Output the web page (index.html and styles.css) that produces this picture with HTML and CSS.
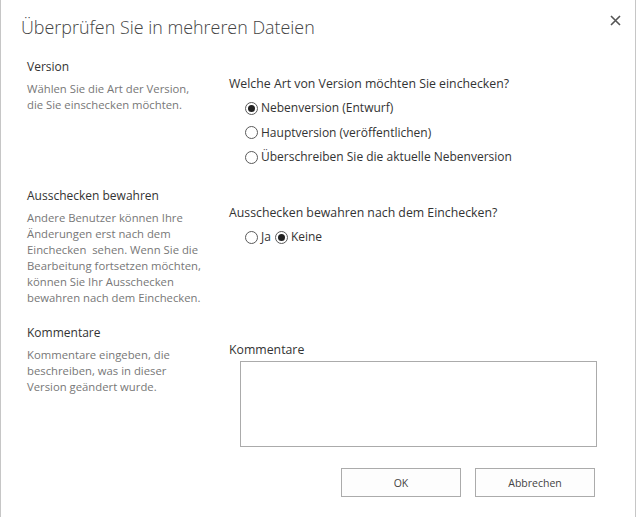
FILE: index.html
```html
<!DOCTYPE html>
<html lang="de">
<head>
    <meta charset="UTF-8">
    <meta name="viewport" content="width=device-width, initial-scale=1.0">
    <title>Überprüfen Sie in mehreren Dateien</title>
    <link rel="stylesheet" href="styles.css">
</head>
<body>
    <div class="dialog">
        <div class="dialog-header">
            <h1 class="dialog-title">Überprüfen Sie in mehreren Dateien</h1>
            <button class="close-btn" aria-label="Schließen">
                <svg width="11" height="11" viewBox="0 0 11 11">
                    <path d="M1 1 L10 10 M10 1 L1 10" stroke="#555" stroke-width="1.6" fill="none"/>
                </svg>
            </button>
        </div>

        <div class="section section-version">
            <div class="section-info">
                <h2>Version</h2>
                <p>Wählen Sie die Art der Version, die Sie einschecken möchten.</p>
            </div>
            <div class="section-field">
                <div class="field-label">Welche Art von Version möchten Sie einchecken?</div>
                <div class="radio-list">
                    <label class="radio"><input type="radio" name="version" checked> Nebenversion (Entwurf)</label>
                    <label class="radio"><input type="radio" name="version"> Hauptversion (veröffentlichen)</label>
                    <label class="radio"><input type="radio" name="version"> Überschreiben Sie die aktuelle Nebenversion</label>
                </div>
            </div>
        </div>

        <div class="section section-keep">
            <div class="section-info">
                <h2>Ausschecken bewahren</h2>
                <p>Andere Benutzer können Ihre Änderungen erst nach dem Einchecken&nbsp; sehen. Wenn Sie die Bearbeitung fortsetzen möchten, können Sie Ihr Ausschecken bewahren nach dem Einchecken.</p>
            </div>
            <div class="section-field">
                <div class="field-label">Ausschecken bewahren nach dem Einchecken?</div>
                <div class="radio-inline">
                    <label class="radio"><input type="radio" name="keep"> Ja</label>
                    <label class="radio"><input type="radio" name="keep" checked> Keine</label>
                </div>
            </div>
        </div>

        <div class="section section-comments">
            <div class="section-info">
                <h2>Kommentare</h2>
                <p>Kommentare eingeben, die beschreiben, was in dieser Version geändert wurde.</p>
            </div>
            <div class="section-field">
                <div class="field-label">Kommentare</div>
                <textarea class="comments"></textarea>
            </div>
        </div>

        <div class="dialog-buttons">
            <button class="btn">OK</button>
            <button class="btn">Abbrechen</button>
        </div>
    </div>
</body>
</html>
```

FILE: styles.css
```css
* {
    margin: 0;
    padding: 0;
    box-sizing: border-box;
}

body {
    font-family: "Open Sans", "Noto Sans", Arial, sans-serif;
    background: #ffffff;
    color: #444444;
    font-size: 12px;
    line-height: 16px;
}

.dialog {
    width: 636px;
    height: 517px;
    border-left: 1px solid #c6c6c6;
    border-right: 1px solid #c6c6c6;
    padding: 0 0 0 26px;
}

.dialog-header {
    display: flex;
    align-items: flex-start;
    height: 59px;
    margin-left: -6px;
}

.dialog-title {
    font-size: 17.9px;
    font-weight: 300;
    line-height: 24px;
    color: #444444;
    margin-top: 15px;
}

.close-btn {
    margin-left: auto;
    margin-right: 14px;
    margin-top: 15px;
    background: none;
    border: none;
    width: 11px;
    height: 11px;
    display: flex;
    cursor: pointer;
}

.section {
    display: grid;
    grid-template-columns: 202px 1fr;
}

.section-version {
    height: 129px;
}

.section-keep {
    height: 137px;
}

.section-comments {
    height: 135px;
}

.section-info h2 {
    font-size: 12px;
    font-weight: 400;
    color: #333333;
    line-height: 16px;
    margin-bottom: 6px;
}

.section-info p {
    font-size: 11.3px;
    line-height: 16px;
    color: #777777;
    width: 180px;
}

.section-field {
    padding-top: 17px;
}

.field-label {
    font-size: 12.3px;
    color: #333333;
    line-height: 16px;
}

.radio-list {
    display: flex;
    flex-direction: column;
    gap: 8.5px;
    margin-top: 8px;
    padding-left: 16px;
}

.radio-inline {
    display: flex;
    gap: 4px;
    margin-top: 8px;
    padding-left: 16px;
}

.radio {
    display: flex;
    align-items: center;
    gap: 2px;
    color: #333333;
    line-height: 16px;
}

.radio input {
    appearance: none;
    -webkit-appearance: none;
    width: 13px;
    height: 13px;
    border: 1px solid #5a5a5a;
    border-radius: 50%;
    margin: 0 1px 0 0;
    display: grid;
    place-items: center;
}

.radio input:checked::after {
    content: "";
    width: 7px;
    height: 7px;
    border-radius: 50%;
    background: #222222;
}

.comments {
    display: block;
    width: 357px;
    height: 86px;
    margin: 3px 0 0 11px;
    border: 1px solid #ababab;
    resize: none;
    font-family: inherit;
}

.dialog-buttons {
    display: flex;
    gap: 14px;
    padding-left: 314px;
    margin-top: 8px;
}

.btn {
    width: 120px;
    height: 29px;
    background: #fdfdfd;
    border: 1px solid #ababab;
    font-family: inherit;
    font-size: 10.5px;
    color: #444444;
    cursor: pointer;
}
```
